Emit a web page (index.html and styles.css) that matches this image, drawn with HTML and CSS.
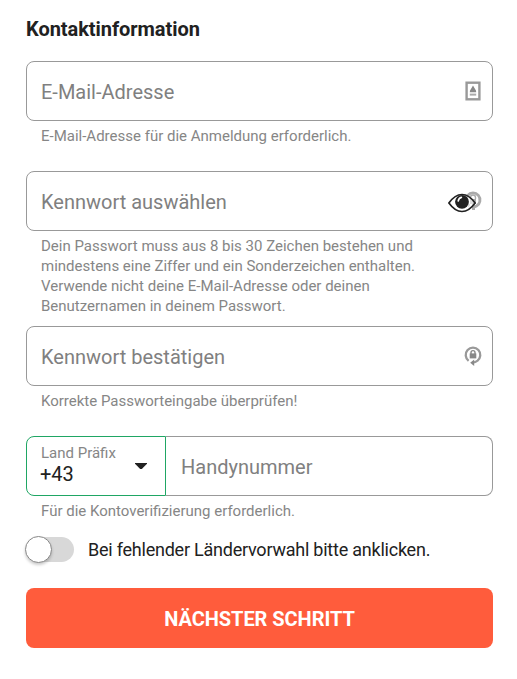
FILE: index.html
```html
<!DOCTYPE html>
<html lang="de">
<head>
  <meta charset="UTF-8" />
  <meta name="viewport" content="width=device-width, initial-scale=1.0"/>
  <title>Registrierung</title>
  <link rel="stylesheet" href="styles.css">
</head>
<body>

  <form class="contact-form">
    <h1>Kontaktinformation</h1>

    <div class="form-group email">
      <div class="field">
        <label class="placeholder">E-Mail-Adresse</label>
        <svg class="icon" width="20" height="22" viewBox="0 0 20 22">
          <rect x="3.6" y="2.7" width="12.8" height="16.6" fill="#fff" stroke="#999" stroke-width="2.4"/>
          <path d="M10 5.4L12.2 9.2Q13.2 10 13.2 12.2H6.8Q6.8 10 7.8 9.2Z" fill="#888"/>
          <path d="M6.8 14.6H13.2" stroke="#aaa" stroke-width="2"/>
        </svg>
      </div>
      <p class="hint">E-Mail-Adresse für die Anmeldung erforderlich.</p>
    </div>

    <div class="form-group password">
      <div class="field">
        <label class="placeholder">Kennwort auswählen</label>
        <svg class="icon" width="20" height="22" viewBox="0 0 20 22">
          <path d="M6.5 16A7 7 0 1 1 13.5 16L10 17.6" fill="none" stroke="#aaa" stroke-width="2.8"/>
          <path d="M7.5 9V7.5a2.5 2.5 0 0 1 5 0V9" fill="none" stroke="#aaa" stroke-width="1.4"/>
          <path d="M7 9h6v5H7zM9 14h3v6H9z" fill="#aaa"/>
        </svg>
        <svg class="eye" width="28" height="20" viewBox="0 0 28 20">
          <path d="M.9 10Q7 1.5 14 1.5T27.1 10Q21 18.5 14 18.5T.9 10Z" fill="#fff" fill-opacity=".6" stroke="#212121" stroke-width="1.7"/>
          <circle cx="14" cy="8.8" r="6.9" fill="#212121"/>
          <path d="M10.2 8Q10.7 5 13.4 4.4" fill="none" stroke="#fff" stroke-width="1.6" stroke-linecap="round"/>
        </svg>
      </div>
      <p class="hint">Dein Passwort muss aus 8 bis 30 Zeichen bestehen und<br>mindestens eine Ziffer und ein Sonderzeichen enthalten.<br>Verwende nicht deine E-Mail-Adresse oder deinen<br>Benutzernamen in deinem Passwort.</p>
    </div>

    <div class="form-group confirm">
      <div class="field">
        <label class="placeholder">Kennwort bestätigen</label>
        <svg class="icon" width="20" height="22" viewBox="0 0 20 22">
          <path d="M5.6 15.8A7.3 7.3 0 1 1 14.4 15.8Q12.6 17.6 9.6 17.6" fill="none" stroke="#999" stroke-width="2.3"/>
          <path d="M11.2 14.6V21L7.2 17.7Z" fill="#888"/>
          <path d="M8 9V7.6a2 2 0 0 1 4 0V9" fill="none" stroke="#888" stroke-width="1.4"/>
          <rect x="6.7" y="8.4" width="6.6" height="5" fill="#888"/>
        </svg>
      </div>
      <p class="hint">Korrekte Passworteingabe überprüfen!</p>
    </div>

    <div class="form-group phone">
      <div class="phone-row">
        <div class="prefix">
          <div>
            <label class="prefix-label">Land Präfix</label>
            <div class="prefix-value">+43</div>
          </div>
          <svg class="arrow" width="12" height="6" viewBox="0 0 12 6">
            <path d="M0 0H12V.8L6.8 6H5.2L0 .8Z" fill="#212121"/>
          </svg>
        </div>
        <div class="field number">
          <label class="placeholder">Handynummer</label>
        </div>
      </div>
      <p class="hint">Für die Kontoverifizierung erforderlich.</p>
    </div>

    <div class="toggle-row">
      <span class="toggle"><span class="knob"></span></span>
      <span class="toggle-text">Bei fehlender Ländervorwahl bitte anklicken.</span>
    </div>

    <button type="button" class="submit-btn">NÄCHSTER SCHRITT</button>
  </form>

</body>
</html>
```

FILE: styles.css
```css
* {
  box-sizing: border-box;
  margin: 0;
  padding: 0;
}

body {
  font-family: Roboto, Arial, sans-serif;
  background-color: #fff;
  color: #212121;
}

.contact-form {
  width: 517px;
  padding: 17px 24px 31px 26px;
}

h1 {
  font-size: 20px;
  font-weight: 700;
  letter-spacing: -0.05px;
  line-height: 24px;
  margin-bottom: 20px;
}

.field {
  display: flex;
  align-items: center;
  position: relative;
  height: 60px;
  padding: 2px 9px 0 14px;
  border: 1px solid #999;
  border-radius: 8px;
}

.placeholder {
  flex: 1;
  font-size: 20px;
  font-weight: 400;
  color: #808080;
  white-space: nowrap;
}

.icon {
  display: block;
  margin-top: -2px;
}

.eye {
  position: absolute;
  right: 16px;
  top: 21px;
}

.hint {
  padding: 5px 0 0 15px;
  font-size: 15px;
  line-height: 20px;
  color: #868686;
  white-space: nowrap;
}

.email,
.confirm {
  margin-bottom: 25px;
}

.password {
  margin-bottom: 10px;
}

.phone-row {
  display: flex;
}

.prefix {
  display: flex;
  justify-content: space-between;
  align-items: center;
  width: 140px;
  height: 60px;
  padding: 0 18px 0 13px;
  border: 1px solid #1fa664;
  border-radius: 8px 0 0 8px;
}

.prefix-label {
  display: block;
  padding-left: 1px;
  font-size: 15px;
  line-height: 18px;
  color: #868686;
}

.prefix-value {
  padding-bottom: 2px;
  font-size: 20px;
  line-height: 24px;
}

.number {
  flex: 1;
  padding-left: 15px;
  border-left: none;
  border-radius: 0 8px 8px 0;
}

.toggle-row {
  display: flex;
  align-items: center;
  height: 28px;
  margin-top: 14px;
}

.toggle {
  display: block;
  width: 48px;
  height: 25px;
  border-radius: 13px;
  background-color: #d8d8d8;
}

.knob {
  display: block;
  width: 27px;
  height: 27px;
  margin: -1px 0 0 -1px;
  border: 1px solid #888;
  border-radius: 50%;
  background-color: #fff;
  box-shadow: 0 2px 3px rgba(0, 0, 0, 0.2);
}

.toggle-text {
  margin-left: 14px;
  font-size: 18px;
  letter-spacing: -0.23px;
}

.submit-btn {
  display: block;
  width: 100%;
  height: 60px;
  margin-top: 25px;
  padding-top: 2px;
  border: none;
  border-radius: 8px;
  background-color: #ff5c3c;
  color: #fff;
  font-family: inherit;
  font-size: 20px;
  font-weight: 700;
  letter-spacing: -0.05px;
  cursor: pointer;
}
```
